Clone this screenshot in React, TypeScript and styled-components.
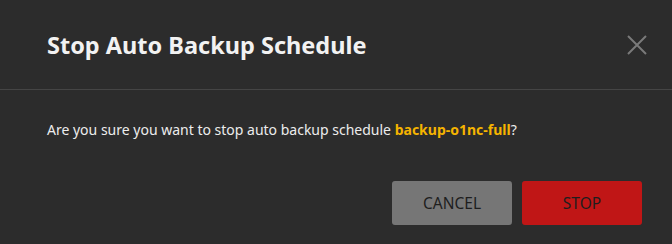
import React from 'react';
import styled, { createGlobalStyle } from 'styled-components';

const GlobalStyle = createGlobalStyle`
  html, body {
    margin: 0;
    padding: 0;
    background: #2c2c2c;
  }
  body {
    font-family: "Noto Sans", Lato, sans-serif;
  }
`;

const Modal = styled.div`
  width: 672px;
  height: 244px;
  background: #2c2c2c;
  display: flex;
  flex-direction: column;
`;

const Header = styled.div`
  height: 90px;
  box-sizing: border-box;
  display: flex;
  align-items: center;
  justify-content: space-between;
  padding: 0 25px 0 47px;
  border-bottom: 1px solid #454545;
`;

const Title = styled.h2`
  margin: 0;
  font-size: 23.5px;
  font-weight: 700;
  color: #f2f2f2;
`;

const CloseButton = styled.button`
  width: 20px;
  height: 20px;
  padding: 0;
  border: none;
  background: transparent;
  cursor: pointer;
  display: flex;
`;

const Body = styled.div`
  padding: 30px 47px 0;
`;

const Message = styled.p`
  margin: 0;
  font-size: 14px;
  line-height: 20px;
  color: #ececec;
`;

const Highlight = styled.span`
  color: #f5b400;
  font-weight: 700;
`;

const Footer = styled.div`
  display: flex;
  justify-content: flex-end;
  gap: 10px;
  padding: 41px 30px 0;
`;

const ActionButton = styled.button<{ $danger?: boolean }>`
  width: 120px;
  height: 44px;
  border: none;
  border-radius: 3px;
  background: ${p => (p.$danger ? '#c01616' : '#767676')};
  color: #1e1e1e;
  font-family: "Noto Sans", Lato, sans-serif;
  font-size: 15.5px;
  text-transform: uppercase;
  cursor: pointer;
`;

export default function App() {
  return (
    <>
      <GlobalStyle />
      <Modal>
        <Header>
          <Title>Stop Auto Backup Schedule</Title>
          <CloseButton aria-label="Close">
            <svg width="20" height="20" viewBox="0 0 20 20">
              <path d="M1 1 L19 19 M19 1 L1 19" stroke="#7a7a7a" strokeWidth="2" />
            </svg>
          </CloseButton>
        </Header>
        <Body>
          <Message>
            Are you sure you want to stop auto backup schedule <Highlight>backup-o1nc-full</Highlight>?
          </Message>
        </Body>
        <Footer>
          <ActionButton>Cancel</ActionButton>
          <ActionButton $danger>Stop</ActionButton>
        </Footer>
      </Modal>
    </>
  );
}
